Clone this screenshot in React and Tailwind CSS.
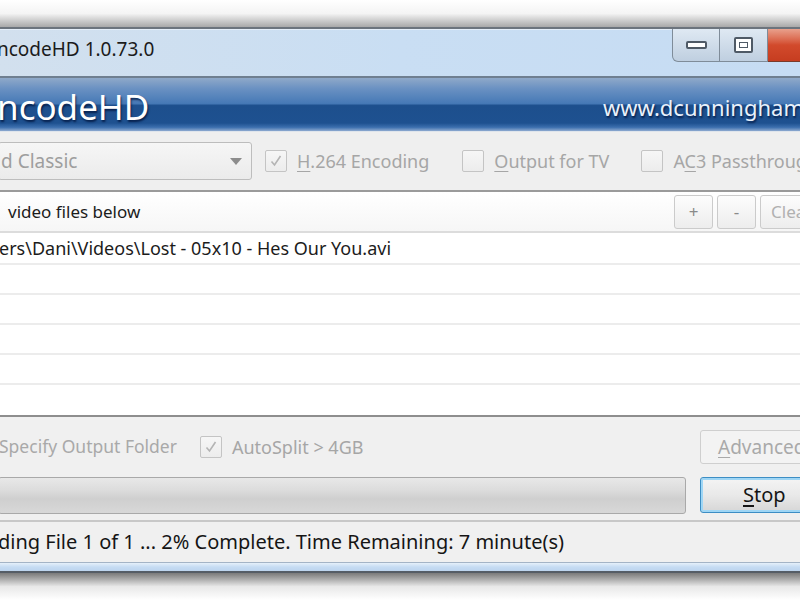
import React from "react";

const UI = "font-['Noto_Sans','Open_Sans',sans-serif]";

function CheckBox({ checked }) {
  return (
    <div className="w-[22px] h-[22px] shrink-0 rounded-[2px] border border-[#c4c4c4] bg-gradient-to-b from-[#f6f6f6] to-[#ececec] flex items-center justify-center">
      {checked && (
        <svg width="14" height="14" viewBox="0 0 14 14">
          <path d="M2.5 7.5 L5.5 11 L11.5 2" fill="none" stroke="#b4b4b4" strokeWidth="1.6" />
        </svg>
      )}
    </div>
  );
}

function Option({ checked, children, className = "" }) {
  return (
    <div className={`flex items-center gap-[10px] shrink-0 ${className}`}>
      <CheckBox checked={checked} />
      <span className="text-[18px] text-[#a6a6a6] leading-none whitespace-nowrap">{children}</span>
    </div>
  );
}

function SmallButton({ children, className = "" }) {
  return (
    <div
      className={`h-[34px] shrink-0 rounded-[3px] border border-[#cbcbcb] bg-gradient-to-b from-[#fdfdfd] to-[#ededed] flex items-center justify-center text-[17px] text-[#8a8a8a] leading-none ${className}`}
    >
      {children}
    </div>
  );
}

export default function App() {
  return (
    <div className={`w-[800px] h-[600px] overflow-hidden bg-white flex flex-col ${UI}`}>
      {/* desktop behind the window, with the window's upper shadow */}
      <div className="h-[27px] shrink-0 bg-gradient-to-b from-white via-[#f4f4f4] to-[#a9a9a9]" />

      <div className="flex flex-col border-t-2 border-[#6c747d]">
        {/* title bar */}
        <div className="h-[49px] shrink-0 flex items-start bg-gradient-to-r from-[#d2e0ee] via-[#c9def3] to-[#c6dcf3] border-t border-[#e4eef9] border-b-2 border-b-[#6f7f90]">
          <div className="flex-1 pt-[10px] -ml-[3px] text-[19px] text-[#1b1b1b] leading-none whitespace-nowrap">
            ncodeHD 1.0.73.0
          </div>
          <div className="flex h-[33px] -mt-[1px] shrink-0">
            <div className="w-[48px] h-full rounded-bl-[6px] border border-t-0 border-[#7f8c99] bg-gradient-to-b from-[#dfe9f3] to-[#bfcfe0] flex items-center justify-center">
              <div className="w-[21px] h-[8px] rounded-[2px] border-2 border-[#4f5a66] bg-white" />
            </div>
            <div className="w-[48px] h-full border-b border-r border-[#7f8c99] bg-gradient-to-b from-[#dfe9f3] to-[#bfcfe0] flex items-center justify-center">
              <div className="w-[19px] h-[16px] rounded-[2px] border-2 border-[#4f5a66] bg-white flex items-center justify-center">
                <div className="w-[9px] h-[6px] border border-[#4f5a66]" />
              </div>
            </div>
            <div className="w-[32px] h-full border-b border-[#7a3a2a] bg-gradient-to-b from-[#e8a08c] via-[#d24a2c] to-[#c63d20]" />
          </div>
        </div>

        {/* banner */}
        <div className="h-[53px] shrink-0 bg-[linear-gradient(to_bottom,#8fa9c9_0%,#6a91c2_20%,#4679b6_48%,#1d4f8d_52%,#1e5190_85%,#3c6fae_93%,#8eaad0_100%)] flex items-center justify-between">
          <div className="-ml-[3px] pt-[4px] text-[35px] text-white leading-none whitespace-nowrap [text-shadow:1px_2px_2px_rgba(0,20,60,0.8)]">
            ncodeHD
          </div>
          <div className="-mr-[4px] pt-[4px] text-[22px] text-[#e9f1fb] leading-none whitespace-nowrap [text-shadow:1px_2px_2px_rgba(0,20,60,0.8)]">
            www.dcunningham
          </div>
        </div>

        {/* preset and options row */}
        <div className="h-[61px] shrink-0 bg-[#efefef] border-t border-[#dfe5ec] flex items-center border-b-2 border-b-[#9a9a9a]">
          <div className="w-[254px] h-[38px] shrink-0 -ml-[2px] rounded-[3px] border border-[#bdbdbd] bg-gradient-to-b from-[#f6f6f6] to-[#ebebeb] flex items-center justify-between pr-[9px]">
            <span className="pl-[2px] text-[19px] text-[#9e9e9e] leading-none whitespace-nowrap">d Classic</span>
            <svg width="12" height="7" viewBox="0 0 12 7">
              <path d="M0 0 H12 L6 7 Z" fill="#8c8c8c" />
            </svg>
          </div>
          <Option checked className="ml-[13px]">
            <span className="underline underline-offset-[3px]">H</span>.264 Encoding
          </Option>
          <Option className="ml-[33px]">
            <span className="underline underline-offset-[3px]">O</span>utput for TV
          </Option>
          <Option className="ml-[32px]">
            A<span className="underline underline-offset-[3px]">C</span>3 Passthrough
          </Option>
        </div>

        {/* file list */}
        <div className="bg-white flex flex-col">
          <div className="h-[41px] shrink-0 bg-gradient-to-b from-white to-[#f6f6f6] border-b-2 border-[#dcdcdc] flex items-center">
            <div className="flex-1 pl-[8px] text-[17px] text-[#1c1c1c] leading-none whitespace-nowrap">
              video files below
            </div>
            <div className="flex gap-[4px] items-center shrink-0">
              <SmallButton className="w-[39px]">+</SmallButton>
              <SmallButton className="w-[39px]">-</SmallButton>
              <SmallButton className="w-[48px] justify-start pl-[10px] -mr-[8px] text-[#b0b0b0] overflow-hidden">Clear</SmallButton>
            </div>
          </div>
          <div className="h-[32px] border-b-2 border-[#ececec] flex items-center text-[18px] text-[#1c1c1c] leading-none whitespace-nowrap -ml-[1px]">
            ers\Dani\Videos\Lost - 05x10 - Hes Our You.avi
          </div>
          <div className="h-[30px] border-b-2 border-[#ececec]" />
          <div className="h-[30px] border-b-2 border-[#ececec]" />
          <div className="h-[30px] border-b-2 border-[#ececec]" />
          <div className="h-[30px] border-b-2 border-[#ececec]" />
          <div className="h-[30px]" />
        </div>

        {/* output options */}
        <div className="h-[62px] shrink-0 bg-[#f0f0f0] border-t-2 border-[#8e8e8e] flex items-center">
          <span className="-ml-[1px] text-[17.5px] text-[#a9a9a9] leading-none whitespace-nowrap">Specify Output Folder</span>
          <Option checked className="ml-[23px]">AutoSplit &gt; 4GB</Option>
          <div className="flex-1" />
          <div className="w-[104px] h-[34px] shrink-0 -mr-[4px] rounded-[3px] border border-[#cfcfcf] bg-[#f3f3f3] flex items-center pl-[17px] text-[19px] text-[#a9a9a9] leading-none whitespace-nowrap">
            <span className="underline underline-offset-[3px]">A</span>dvanced
          </div>
        </div>

        {/* progress and stop */}
        <div className="h-[45px] shrink-0 bg-[#f0f0f0] flex items-start border-b-2 border-[#c8c8c8]">
          <div className="w-[688px] h-[37px] shrink-0 -ml-[2px] rounded-[3px] border border-[#a9a9a9] bg-[linear-gradient(to_bottom,#e8e8e8_0%,#dcdcdc_35%,#cfcfcf_60%,#d8d8d8_100%)]" />
          <div className="ml-[14px] w-[104px] h-[36px] shrink-0 rounded-[3px] border border-[#3d8ec4] shadow-[inset_0_0_0_2px_#9fd6f5] bg-gradient-to-b from-[#f4f4f4] via-[#e9e9e9] to-[#d6d6d6] flex items-center pl-[42px] text-[20px] text-[#151515] leading-none">
            <span className="underline underline-offset-[3px]">S</span>top
          </div>
        </div>

        {/* status bar */}
        <div className="h-[40px] shrink-0 bg-[#f0f0f0] flex items-center text-[20px] text-[#151515] leading-none whitespace-nowrap">
          <span className="-ml-[2px]">ding File 1 of 1 ... 2% Complete. Time Remaining: 7 minute(s)</span>
        </div>

        {/* lower window frame */}
        <div className="h-[11px] shrink-0 border-t border-[#a4b4c6] bg-gradient-to-b from-[#e6f0fa] via-[#c6dcf3] to-[#bcd4ee] border-b-2 border-b-[#555d66]" />
      </div>

      {/* lower shadow on the desktop */}
      <div className="flex-1 bg-gradient-to-b from-[#7a7a7a] via-[#e8e8e8] to-white" />
    </div>
  );
}
